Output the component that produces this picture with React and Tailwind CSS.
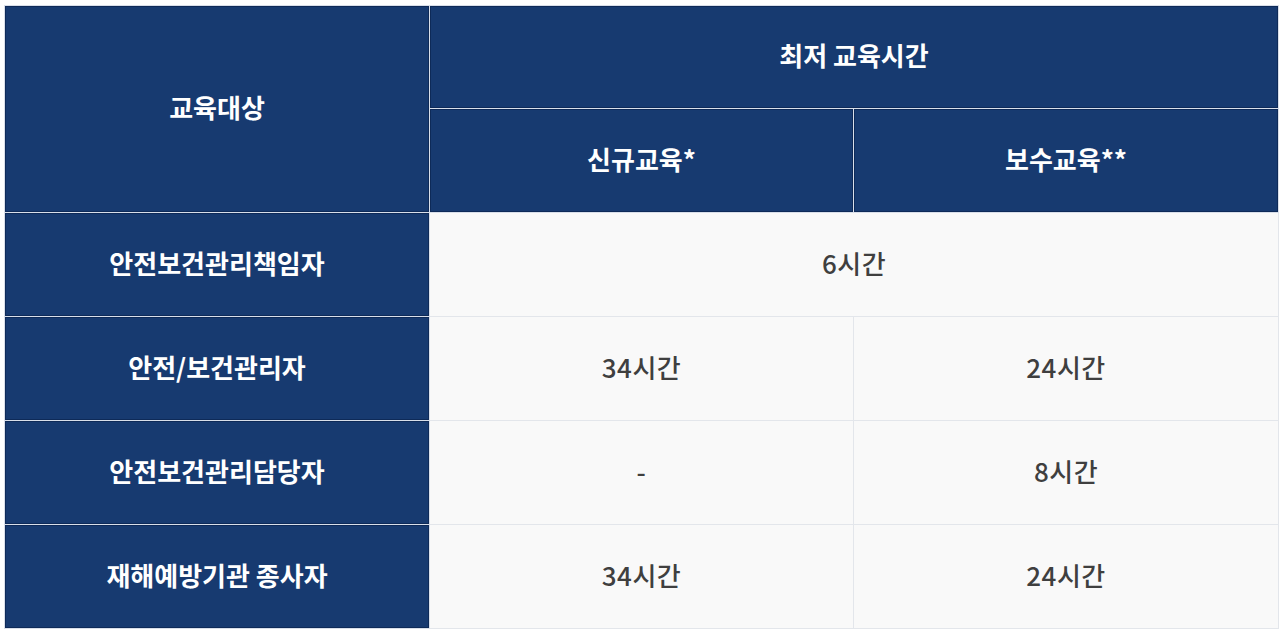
const rows = [
  { target: "안전보건관리책임자", merged: "6시간" },
  { target: "안전/보건관리자", newEdu: "34시간", refresh: "24시간" },
  { target: "안전보건관리담당자", newEdu: "-", refresh: "8시간" },
  { target: "재해예방기관 종사자", newEdu: "34시간", refresh: "24시간" },
];

export default function App() {
  const head =
    "bg-[#173a70] text-white font-bold text-[26px] leading-none pb-[4px] text-center align-middle border border-[#d9dfea] shadow-[inset_0_0_0_1px_#0e2a58]";
  const body =
    "bg-[#f9f9f9] text-[#3f3f3f] font-medium text-[26px] leading-none pb-[4px] tracking-[0.5px] text-center align-middle border border-[#e3e6eb]";

  return (
    <div
      className="bg-white w-[1280px] h-[636px] pt-[5px] pl-[4px]"
      style={{ fontFamily: '"Noto Sans CJK KR", "Noto Sans", sans-serif' }}
    >
      <table className="border-collapse table-fixed w-[1274px]">
        <colgroup>
          <col className="w-[425px]" />
          <col className="w-[424px]" />
          <col className="w-[425px]" />
        </colgroup>
        <thead>
          <tr className="h-[103px]">
            <th rowSpan={2} className={head}>
              교육대상
            </th>
            <th colSpan={2} className={head}>
              최저 교육시간
            </th>
          </tr>
          <tr className="h-[104px]">
            <th className={head}>신규교육*</th>
            <th className={head}>보수교육**</th>
          </tr>
        </thead>
        <tbody>
          {rows.map((r) => (
            <tr key={r.target} className="h-[104px]">
              <th className={head}>{r.target}</th>
              {r.merged ? (
                <td colSpan={2} className={body}>
                  {r.merged}
                </td>
              ) : (
                <>
                  <td className={body}>{r.newEdu}</td>
                  <td className={body}>{r.refresh}</td>
                </>
              )}
            </tr>
          ))}
        </tbody>
      </table>
    </div>
  );
}
